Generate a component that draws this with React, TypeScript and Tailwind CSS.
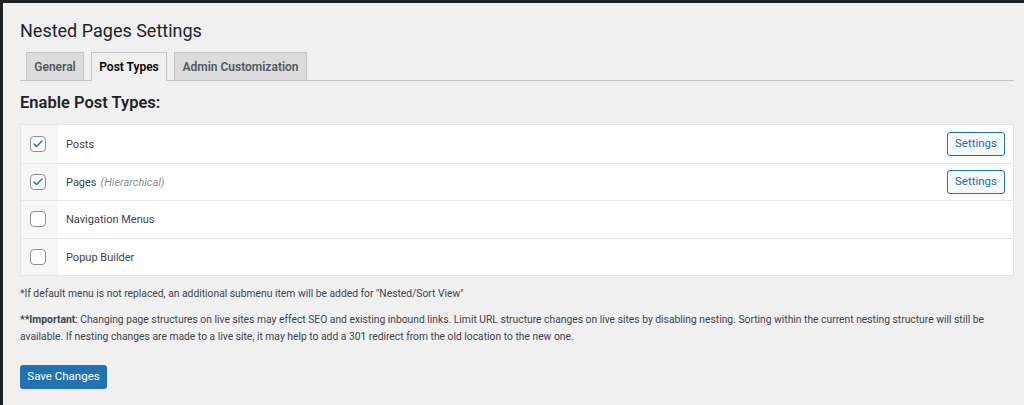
import { Check } from "lucide-react";

const rows = [
  { label: "Posts", note: "", checked: true, settings: true },
  { label: "Pages", note: "(Hierarchical)", checked: true, settings: true },
  { label: "Navigation Menus", note: "", checked: false, settings: false },
  { label: "Popup Builder", note: "", checked: false, settings: false },
];

function Box({ on }: { on: boolean }) {
  return (
    <div className="w-4 h-4 rounded-[4px] border border-[#8c8f94] bg-white flex items-center justify-center">
      {on && <Check size={12} strokeWidth={3} className="text-[#2271b1]" />}
    </div>
  );
}

export default function App() {
  return (
    <div className="w-[1024px] h-[405px] bg-[#1d2327] pt-[3px] pl-[3px] font-['Roboto',sans-serif]">
      <div className="h-full bg-[#f0f0f1] pl-[17px] pr-[10px] text-[#3c434a]">
        <h1 className="text-[18px] text-[#1d2327] pt-[15px] leading-[26px]">Nested Pages Settings</h1>

        <div className="mt-[7px] flex items-end gap-[7px] pl-[6px] border-b border-[#c3c4c7] h-[30px]">
          <div className="h-[28px] w-[58px] justify-center flex items-center bg-[#dcdcde] border border-b-0 border-[#c3c4c7] text-[12px] font-semibold text-[#50575e]">General</div>
          <div className="h-[29px] w-[76px] justify-center -mb-px flex items-center bg-[#f0f0f1] border border-b-0 border-[#c3c4c7] text-[12px] font-semibold text-[#000]">Post Types</div>
          <div className="h-[28px] w-[133px] justify-center flex items-center bg-[#dcdcde] border border-b-0 border-[#c3c4c7] text-[12px] font-semibold text-[#50575e]">Admin Customization</div>
        </div>

        <h2 className="mt-[12px] text-[16.5px] font-semibold text-[#1d2327] leading-[20px]">Enable Post Types:</h2>

        <div className="mt-[11px] border border-[#e2e3e5] bg-white">
          {rows.map((r, i) => (
            <div key={r.label} className={`flex h-[37.5px] ${i > 0 ? "border-t border-[#e6e7e8]" : ""}`}>
              <div className="w-[37px] bg-[#f6f7f7] flex items-center justify-center pr-[3px] shrink-0">
                <Box on={r.checked} />
              </div>
              <div className="flex-1 flex items-center justify-between pl-[8px] pr-[8px]">
                <span className="text-[11px] text-[#3c434a] pt-[2px]">
                  {r.label}
                  {r.note && <i className="text-[#8c8f94] ml-1">{r.note}</i>}
                </span>
                {r.settings && (
                  <button className="h-[24px] w-[58px] text-[11.5px] text-[#2271b1] border border-[#2271b1] rounded-[3px] bg-[#f6f7f7]">Settings</button>
                )}
              </div>
            </div>
          ))}
        </div>

        <p className="mt-[9px] text-[10.3px] leading-[17px] text-[#3c434a]">*If default menu is not replaced, an additional submenu item will be added for "Nested/Sort View"</p>
        <p className="mt-[9px] text-[10.3px] leading-[17px] text-[#3c434a] pr-[8px]">
          <b>**Important</b>: Changing page structures on live sites may effect SEO and existing inbound links. Limit URL structure changes on live sites by disabling nesting. Sorting within the current nesting structure will still be available. If nesting changes are made to a live site, it may help to add a 301 redirect from the old location to the new one.
        </p>

        <button className="mt-[20px] h-[24px] w-[87px] bg-[#2271b1] text-white text-[11.5px] rounded-[3px]">Save Changes</button>
      </div>
    </div>
  );
}
